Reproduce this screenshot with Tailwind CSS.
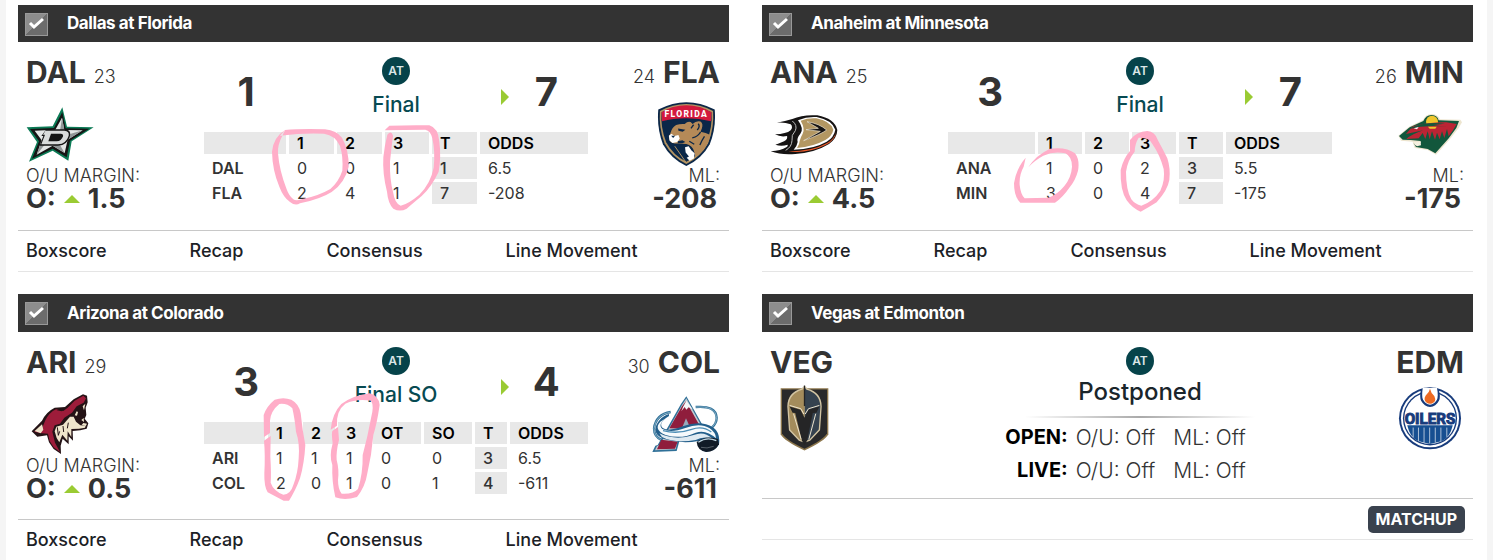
<!DOCTYPE html>
<html lang="en">
<head>
  <meta charset="utf-8" />
  <meta name="viewport" content="width=device-width, initial-scale=1" />
  <title>NHL Scoreboard</title>
  <script src="https://cdn.jsdelivr.net/npm/@tailwindcss/browser@4"></script>
</head>
<body class="bg-[#f5f5f5] font-['Inter',sans-serif] text-[#333]">
  <main class="mx-[6px] min-h-screen bg-white pt-[5px] pr-[14px] pl-3 grid grid-cols-2 gap-x-[33px] gap-y-[22px] items-start content-start overflow-hidden">

    <!-- Dallas at Florida -->
    <article>
      <header class="bg-[#333] h-[37px] pt-px pl-[7px] flex items-center">
        <label class="flex items-center gap-[19px] text-white text-[17px] font-bold tracking-tight">
          <span class="relative block size-[23px]">
            <input type="checkbox" checked class="appearance-none block size-[23px] border border-[#999] bg-linear-135 from-[#8d8d8d] from-50% to-[#6c6c6c] to-50%" />
            <svg class="absolute inset-0 pointer-events-none" viewBox="0 0 23 23" fill="none" stroke="#fff" stroke-width="3"><path d="M5 10l4 4 9-8" /></svg>
          </span>
          Dallas at Florida
        </label>
      </header>
      <div class="grid grid-cols-[183fr_390fr_138fr] h-[188px] border-b border-[#c8c8c8] box-content">
        <section class="pl-2 pt-3">
          <h2 class="flex items-baseline gap-2 text-[30px] leading-9 font-bold">DAL <small class="text-lg font-light">23</small></h2>
          <div class="mt-[11px] w-[68px] h-16 flex items-center justify-center">
            <svg class="w-[68px] h-[55px]" viewBox="78 318 204 165">
              <path d="M187 319L201 377L281 379L215 421L205 479L158 449L87 482L111 423L80 379L158 376Z" fill="#0b7a55" />
              <path d="M187 333L197 382L268 383L210 419L200 469L158 443L96 473L117 421L90 384L162 381Z" fill="#151515" />
              <path d="M186 350L193 387L248 388L203 416L194 456L158 434L110 461L125 418L104 389L166 386Z" fill="#e4e6e6" />
              <path d="M186 350L193 387L180 390ZM248 388L203 416L200 402ZM194 456L158 434L176 425ZM110 461L125 418L135 430Z" fill="#929798" />
              <path d="M139 385H194Q214 386 210 404Q203 432 174 434H119L130 405H124Z" fill="#151515" />
              <path d="M136 389H193Q209 390 206 404Q199 428 174 430H124L135 401H129Z" fill="#d9dbdb" />
              <path d="M153 398H182Q191 399 189 406Q184 421 170 421H145Z" fill="#151515" />
            </svg>
          </div>
          <p class="text-lg leading-5 font-light">O/U MARGIN:</p>
          <p class="flex items-center gap-2 text-[27px] leading-[26px] font-bold">O: <svg class="w-4 h-2" viewBox="0 0 16 8"><path d="M0 8L8 0L16 8Z" fill="#9acb33" /></svg> 1.5</p>
        </section>
        <section class="relative">
          <div class="h-[87px] px-[3px] grid grid-cols-[22fr_55fr_23fr] text-center">
            <strong class="pt-[30px] text-[40px] leading-10 font-bold">1</strong>
            <div class="pt-[15px] pl-1 flex flex-col items-center">
              <span class="size-7 rounded-full bg-[#06434a] text-[#dbe6e7] text-xs font-semibold leading-7">AT</span>
              <p class="mt-2 text-[21px] leading-6 font-medium text-[#074a52]">Final</p>
            </div>
            <div class="relative pt-[30px] pl-[5px]">
              <svg class="absolute left-px top-[47px] w-2 h-4" viewBox="0 0 8 16"><path d="M0 0L8 8L0 16Z" fill="#9acb33" /></svg>
              <strong class="block text-[40px] leading-10 font-bold">7</strong>
            </div>
          </div>
          <table class="w-full table-fixed border-separate border-spacing-[3px] text-base leading-[22px] text-left">
            <colgroup><col class="w-[82px]" /><col class="w-[45px]" /><col class="w-[45px]" /><col class="w-[44px]" /><col class="w-[45px]" /><col /></colgroup>
            <thead>
              <tr class="text-black *:bg-[#e8e8e8] *:pl-2 *:font-semibold">
                <th></th><th scope="col">1</th><th scope="col">2</th><th scope="col">3</th><th scope="col">T</th><th scope="col">ODDS</th>
              </tr>
            </thead>
            <tbody>
              <tr class="*:pl-2"><th scope="row" class="font-semibold">DAL</th><td>0</td><td>0</td><td>1</td><td class="bg-[#e8e8e8] font-medium">1</td><td>6.5</td></tr>
              <tr class="*:pl-2"><th scope="row" class="font-semibold">FLA</th><td>2</td><td>4</td><td>1</td><td class="bg-[#e8e8e8] font-medium">7</td><td>-208</td></tr>
            </tbody>
          </table>
          <!-- Marker strokes -->
          <svg class="absolute left-0 top-0 w-[390px] h-[188px] pointer-events-none" viewBox="33 6 1170 564" fill="#ffadc8">
            <path d="M285 270L270 287Q340 278 402 281Q436 286 450 318Q460 350 457 392Q446 425 421 447Q385 468 335 478Q318 484 310 478Q297 468 290 448Q268 392 264 340Q262 315 277 287L285 270Q250 292 246 335Q247 390 268 440Q280 472 300 486Q316 499 330 490Q390 478 425 456Q465 428 476 380Q477 330 456 293Q440 272 405 268Q330 266 285 270Z" fill-rule="evenodd" />
            <path d="M584 271L598 257Q660 255 718 256Q745 264 748 305Q754 350 746 395Q725 440 695 468Q665 493 650 506Q630 517 610 506Q594 490 591 455Q577 400 580 352Q584 315 592 284Q604 270 609 287Q604 325 600 365Q599 420 609 455Q614 490 632 497Q655 492 688 464Q722 430 731 383Q736 335 727 295Q722 272 706 269Q640 270 584 271Z" />
          </svg>
        </section>
        <section class="pr-[9px] pt-3 flex flex-col items-end">
          <h2 class="flex items-baseline gap-2 text-[30px] leading-9 font-bold"><small class="text-lg font-light">24</small> FLA</h2>
          <div class="mt-[11px] w-[68px] h-16 flex items-center justify-center">
            <svg class="w-[59px] h-16" viewBox="203 182 177 194">
              <path d="M206 205Q250 183 291 183Q333 183 377 205Q382 260 362 310Q338 354 291 376Q244 354 220 310Q201 260 206 205Z" fill="#0b2748" />
              <path d="M211 209Q250 188 291 188Q333 188 372 209Q376 260 357 307Q334 349 291 370Q248 349 225 307Q207 260 211 209Z" fill="#b49462" />
              <path d="M216 213Q251 194 291 194Q331 194 367 213Q371 259 352 304Q331 344 291 363Q251 344 230 304Q212 259 216 213Z" fill="#0b2748" />
              <path d="M216 213Q251 192 291 192Q331 192 367 213L366 240Q330 231 291 231Q251 231 217 240Z" fill="#d3193d" />
              <path d="M243 276Q247 260 260 252Q272 248 286 249Q296 239 304 243L310 249Q320 238 334 241Q343 247 338 262L334 272Q350 275 364 282Q358 314 335 336Q326 344 318 347L314 330Q309 314 291 309L267 308Q248 309 241 300L238 287Z" fill="#b58a58" />
              <path d="M238 284L246 278L255 285L267 282L271 293L264 303L249 306L240 299Z" fill="#fff" />
              <path d="M266 262L288 266L280 272L267 269ZM265 301L279 298L288 303L279 307L265 307ZM245 284L257 284L251 291Z" fill="#0b2748" />
              <path d="M327 248Q334 256 324 267M313 251L305 262M334 273Q328 286 309 291M346 286Q338 298 332 312M300 301L315 310" stroke="#0b2748" stroke-width="4" fill="none" />
              <path d="M287 319L298 316L306 328L316 337L314 353L301 360L292 351L299 347L289 335Z" fill="#fff" />
              <path d="M256 316L283 355L291 366" stroke="#b49462" stroke-width="3" fill="none" />
              <text x="291" y="227" font-size="26" font-weight="800" fill="#fff" text-anchor="middle" font-family="Roboto, sans-serif" letter-spacing="4">FLORIDA</text>
            </svg>
          </div>
          <p class="text-lg leading-5 font-light">ML:</p>
          <p class="pr-[3px] text-[27px] leading-[26px] font-bold">-208</p>
        </section>
      </div>
      <nav class="flex items-center gap-[83px] h-10 pl-2 border-b border-[#e5e5e5] box-content text-lg font-medium text-[#1c2126] whitespace-nowrap">
        <a href="#">Boxscore</a><a href="#">Recap</a><a href="#">Consensus</a><a href="#">Line Movement</a>
      </nav>
    </article>

    <!-- Anaheim at Minnesota -->
    <article>
      <header class="bg-[#333] h-[37px] pt-px pl-[7px] flex items-center">
        <label class="flex items-center gap-[19px] text-white text-[17px] font-bold tracking-tight">
          <span class="relative block size-[23px]">
            <input type="checkbox" checked class="appearance-none block size-[23px] border border-[#999] bg-linear-135 from-[#8d8d8d] from-50% to-[#6c6c6c] to-50%" />
            <svg class="absolute inset-0 pointer-events-none" viewBox="0 0 23 23" fill="none" stroke="#fff" stroke-width="3"><path d="M5 10l4 4 9-8" /></svg>
          </span>
          Anaheim at Minnesota
        </label>
      </header>
      <div class="grid grid-cols-[183fr_390fr_138fr] h-[188px] border-b border-[#c8c8c8] box-content">
        <section class="pl-2 pt-3">
          <h2 class="flex items-baseline gap-2 text-[30px] leading-9 font-bold">ANA <small class="text-lg font-light">25</small></h2>
          <div class="mt-[11px] w-[68px] h-16 flex items-center justify-center">
            <svg class="w-[68px] h-[41px]" viewBox="539 221 204 123">
              <path d="M559 247Q585 242 606 236Q637 222 681 225Q733 235 741 269Q740 294 716 311Q674 337 615 341Q574 345 541 333Q572 331 588 321Q593 318 592 313Q573 319 555 313Q577 306 587 299Q592 293 590 287Q571 291 554 282Q588 281 601 270Q609 260 601 252Q583 245 559 247Z" fill="#151313" />
              <path d="M623 240Q650 228 679 230Q725 239 735 268Q731 291 709 304Q671 326 610 328Q620 318 622 305Q618 294 630 280Q642 266 623 240Z" fill="#fff" />
              <path d="M631 241Q654 232 678 234Q720 242 729 268Q725 287 705 299Q669 319 620 323Q628 312 628 302Q631 290 637 280Q645 265 631 241Z" fill="#b39762" />
              <path d="M737 274Q734 294 710 308Q667 332 594 334Q654 340 704 315Q736 299 737 274Z" fill="#ee5a2a" />
              <path d="M650 244Q688 250 709 269Q692 282 640 301L690 273L647 268Q672 265 684 264Z" fill="#151313" stroke="#eee5d2" stroke-width="2" />
              <path d="M606 242Q622 255 615 271Q602 284 605 301Q604 320 586 330" stroke="#bcbcbc" stroke-width="3" fill="none" />
            </svg>
          </div>
          <p class="text-lg leading-5 font-light">O/U MARGIN:</p>
          <p class="flex items-center gap-2 text-[27px] leading-[26px] font-bold">O: <svg class="w-4 h-2" viewBox="0 0 16 8"><path d="M0 8L8 0L16 8Z" fill="#9acb33" /></svg> 4.5</p>
        </section>
        <section class="relative">
          <div class="h-[87px] px-[3px] grid grid-cols-[22fr_55fr_23fr] text-center">
            <strong class="pt-[30px] text-[40px] leading-10 font-bold">3</strong>
            <div class="pt-[15px] pl-1 flex flex-col items-center">
              <span class="size-7 rounded-full bg-[#06434a] text-[#dbe6e7] text-xs font-semibold leading-7">AT</span>
              <p class="mt-2 text-[21px] leading-6 font-medium text-[#074a52]">Final</p>
            </div>
            <div class="relative pt-[30px] pl-[5px]">
              <svg class="absolute left-px top-[47px] w-2 h-4" viewBox="0 0 8 16"><path d="M0 0L8 8L0 16Z" fill="#9acb33" /></svg>
              <strong class="block text-[40px] leading-10 font-bold">7</strong>
            </div>
          </div>
          <table class="w-full table-fixed border-separate border-spacing-[3px] text-base leading-[22px] text-left">
            <colgroup><col class="w-[87px]" /><col class="w-[44px]" /><col class="w-[44px]" /><col class="w-[44px]" /><col class="w-[44px]" /><col /></colgroup>
            <thead>
              <tr class="text-black *:bg-[#e8e8e8] *:pl-2 *:font-semibold">
                <th></th><th scope="col">1</th><th scope="col">2</th><th scope="col">3</th><th scope="col">T</th><th scope="col">ODDS</th>
              </tr>
            </thead>
            <tbody>
              <tr class="*:pl-2"><th scope="row" class="font-semibold">ANA</th><td>1</td><td>0</td><td>2</td><td class="bg-[#e8e8e8] font-medium">3</td><td>5.5</td></tr>
              <tr class="*:pl-2"><th scope="row" class="font-semibold">MIN</th><td>3</td><td>0</td><td>4</td><td class="bg-[#e8e8e8] font-medium">7</td><td>-175</td></tr>
            </tbody>
          </table>
          <!-- Marker strokes -->
          <svg class="absolute left-0 top-0 w-[390px] h-[188px] pointer-events-none" viewBox="15 6 1170 564" fill="#ffadc8">
            <path d="M265 382Q287 346 330 326Q380 320 405 340Q420 360 414 392Q407 420 388 443Q370 470 345 488H241Q222 470 222 430Q229 385 257 353L251 380Q237 405 239 435Q242 464 254 475L325 473Q352 464 373 438Q394 412 396 380Q396 350 376 340Q342 332 310 347Q282 362 265 382Z" />
            <path fill-rule="evenodd" d="M570 300Q590 274 622 273Q645 275 653 299Q670 330 682 355Q692 385 688 420Q683 450 650 487Q625 503 602 515Q578 506 560 481Q540 450 542 390Q550 355 570 333ZM596 293Q585 310 584 335Q563 360 558 395Q558 450 574 478Q585 493 604 497Q640 484 661 452Q676 420 671 387Q660 345 637 312Q628 292 596 293Z" />
          </svg>
        </section>
        <section class="pr-[9px] pt-3 flex flex-col items-end">
          <h2 class="flex items-baseline gap-2 text-[30px] leading-9 font-bold"><small class="text-lg font-light">26</small> MIN</h2>
          <div class="mt-[11px] w-[68px] h-16 flex items-center justify-center">
            <svg class="w-16 h-[42px]" viewBox="175 337 192 126">
              <path d="M176 405L208 378L250 358Q258 339 278 340Q296 342 301 356L362 357L367 365L357 382L331 415L289 462L264 448L225 442L219 423L184 420Z" fill="#ede5cf" />
              <path d="M178 406L210 380L251 361Q259 342 277 343Q293 344 297 359L358 361L350 382L326 414L287 458L264 445L229 439L222 428L243 427L243 421L213 418L189 417Z" fill="#12573c" />
              <circle cx="277" cy="363" r="18" fill="#efc62c" />
              <path d="M219 377Q269 364 320 365L351 370L340 389L327 407L322 385L314 412L307 392L300 416L292 396L286 417L277 392L270 416L264 392L257 415L249 397L237 413L200 415Q215 401 251 389L199 400Z" fill="#bb2434" />
              <path d="M205 386Q250 360 316 369L280 373L326 380Q265 370 205 386Z" fill="#12573c" />
              <path d="M265 378L291 378L287 384L270 384Z" fill="#efc62c" />
              <path d="M222 383L237 379L232 386Z" fill="#fff" />
              <path d="M221 424L243 423L244 434L232 437L225 432Z" fill="#f5efdf" />
            </svg>
          </div>
          <p class="text-lg leading-5 font-light">ML:</p>
          <p class="pr-[3px] text-[27px] leading-[26px] font-bold">-175</p>
        </section>
      </div>
      <nav class="flex items-center gap-[83px] h-10 pl-2 border-b border-[#e5e5e5] box-content text-lg font-medium text-[#1c2126] whitespace-nowrap">
        <a href="#">Boxscore</a><a href="#">Recap</a><a href="#">Consensus</a><a href="#">Line Movement</a>
      </nav>
    </article>

    <!-- Arizona at Colorado -->
    <article>
      <header class="bg-[#333] h-[38px] pt-px pl-[7px] flex items-center">
        <label class="flex items-center gap-[19px] text-white text-[17px] font-bold tracking-tight">
          <span class="relative block size-[23px]">
            <input type="checkbox" checked class="appearance-none block size-[23px] border border-[#999] bg-linear-135 from-[#8d8d8d] from-50% to-[#6c6c6c] to-50%" />
            <svg class="absolute inset-0 pointer-events-none" viewBox="0 0 23 23" fill="none" stroke="#fff" stroke-width="3"><path d="M5 10l4 4 9-8" /></svg>
          </span>
          Arizona at Colorado
        </label>
      </header>
      <div class="grid grid-cols-[183fr_390fr_138fr] h-[187px] border-b border-[#c8c8c8] box-content">
        <section class="pl-2 pt-3">
          <h2 class="flex items-baseline gap-2 text-[30px] leading-9 font-bold">ARI <small class="text-lg font-light">29</small></h2>
          <div class="mt-[11px] w-[68px] h-16 flex items-center justify-center">
            <svg class="w-[58px] h-[60px]" viewBox="94 337 174 180">
              <path d="M96 449L127 417Q139 391 165 378L196 376L222 353L250 338L262 342L264 362L258 378L260 400L255 411L266 425L261 441L242 446L219 448L220 477L207 464L207 488L189 471L183 492L184 517L162 502L148 482L142 461L113 465Z" fill="#241316" />
              <path d="M137 416Q149 392 169 383L191 388L204 378L225 357L251 342L259 350L252 363L231 374L217 393L194 408L181 426L165 431L158 450L166 483L181 511L162 497L150 478L145 456L127 455L103 450L129 435Z" fill="#9d1c3a" />
              <path d="M211 405L222 405L229 420L242 431L258 432L256 438L238 441L215 442L215 466L204 449L203 477L188 459L179 482L171 469L165 449L170 435L190 429Z" fill="#efe4cb" />
              <path d="M105 448L127 428L131 444L123 455Z" fill="#efe4cb" />
              <path d="M223 403L236 377L254 367L248 380L257 402L246 421L233 417Z" fill="#241316" />
              <path d="M225 401L231 389L235 391L232 402ZM249 374L257 366L253 386ZM245 415L252 409L253 421ZM251 424L262 426L258 433L246 430Z" fill="#efe4cb" />
              <path d="M171 386L193 379L187 389Z" fill="#241316" />
              <path d="M173 437L176 461L180 449M190 433L192 451M206 423L203 440" stroke="#241316" stroke-width="3" fill="none" />
            </svg>
          </div>
          <p class="text-lg leading-5 font-light">O/U MARGIN:</p>
          <p class="flex items-center gap-2 text-[27px] leading-[26px] font-bold">O: <svg class="w-4 h-2" viewBox="0 0 16 8"><path d="M0 8L8 0L16 8Z" fill="#9acb33" /></svg> 0.5</p>
        </section>
        <section class="relative">
          <div class="h-[87px] px-[3px] grid grid-cols-[22fr_55fr_23fr] text-center">
            <strong class="pt-[30px] text-[40px] leading-10 font-bold">3</strong>
            <div class="pt-[15px] pl-1 flex flex-col items-center">
              <span class="size-7 rounded-full bg-[#06434a] text-[#dbe6e7] text-xs font-semibold leading-7">AT</span>
              <p class="mt-2 text-[21px] leading-6 font-medium text-[#074a52]">Final SO</p>
            </div>
            <div class="relative pt-[30px] pl-[5px]">
              <svg class="absolute left-px top-[47px] w-2 h-4" viewBox="0 0 8 16"><path d="M0 0L8 8L0 16Z" fill="#9acb33" /></svg>
              <strong class="block text-[40px] leading-10 font-bold">4</strong>
            </div>
          </div>
          <table class="w-full table-fixed border-separate border-spacing-[3px] text-base leading-[22px] text-left">
            <colgroup><col class="w-[61px]" /><col class="w-8" /><col class="w-8" /><col class="w-8" /><col class="w-12" /><col class="w-12" /><col class="w-8" /><col /></colgroup>
            <thead>
              <tr class="text-black *:bg-[#e8e8e8] *:pl-2 *:font-semibold">
                <th></th><th scope="col">1</th><th scope="col">2</th><th scope="col">3</th><th scope="col">OT</th><th scope="col">SO</th><th scope="col">T</th><th scope="col">ODDS</th>
              </tr>
            </thead>
            <tbody>
              <tr class="*:pl-2"><th scope="row" class="font-semibold">ARI</th><td>1</td><td>1</td><td>1</td><td>0</td><td>0</td><td class="bg-[#e8e8e8] font-medium">3</td><td>6.5</td></tr>
              <tr class="*:pl-2"><th scope="row" class="font-semibold">COL</th><td>2</td><td>0</td><td>1</td><td>0</td><td>1</td><td class="bg-[#e8e8e8] font-medium">4</td><td>-611</td></tr>
            </tbody>
          </table>
          <!-- Marker strokes -->
          <svg class="absolute left-0 top-0 w-[390px] h-[188px] pointer-events-none" viewBox="33 6 1170 564" fill="#ffadc8">
            <path d="M222 321L221 255Q230 228 254 209Q280 200 304 209Q328 222 332 250Q337 300 346 345Q343 400 330 445Q315 485 297 512H281L233 487Q222 470 223 430Q226 375 222 332L242 318L241 380Q244 430 242 458Q250 482 280 494Q302 493 310 465Q324 430 326 385Q330 340 318 305Q314 265 307 235Q291 219 268 222Q242 243 240 272V309Z" />
            <path d="M422 299Q427 250 454 222Q490 196 539 190Q566 197 569 225Q561 280 550 315Q545 375 532 430Q526 470 501 501Q465 512 436 502Q425 455 427 405Q417 380 428 340Q424 310 427 303L444 291L447 330Q438 365 440 390Q448 420 444 450Q444 478 455 491Q490 493 504 477Q519 430 518 375Q533 320 543 265Q553 226 543 212Q500 205 466 221Q438 242 441 287Z" />
          </svg>
        </section>
        <section class="pr-[9px] pt-3 flex flex-col items-end">
          <h2 class="flex items-baseline gap-2 text-[30px] leading-9 font-bold"><small class="text-lg font-light">30</small> COL</h2>
          <div class="mt-[11px] w-[68px] h-16 flex items-center justify-center">
            <svg class="w-[68px] h-[57px]" viewBox="188 343 204 171">
              <path d="M244 391Q200 398 194 440Q194 466 218 476M319 376Q380 371 382 408Q382 425 368 437" fill="none" stroke="#2f7098" stroke-width="7" />
              <path d="M244 391Q200 398 194 440Q194 466 218 476M319 376Q380 371 382 408Q382 425 368 437" fill="none" stroke="#a9c8d8" stroke-width="2" />
              <path d="M291 344L350 449L305 465L272 471L262 508L189 511L198 492L205 490L275 367Z" fill="#2f7098" />
              <path d="M291 350L343 445L304 458L266 472L259 503L197 506L203 493L211 490L278 370Z" fill="#c2c9d0" />
              <path d="M290 359L337 443L240 440L278 374ZM216 474L265 480L257 501L203 503Z" fill="#8f1d3c" />
              <path d="M281 376L291 357L310 383L298 377L291 384L286 376L276 389Z" fill="#f5f7f9" />
              <path d="M290 410L302 437H279Z" fill="#98a9bb" />
              <path d="M239 403Q205 424 220 439Q238 451 280 434Q334 414 371 437Q394 454 389 488Q378 510 349 510Q320 501 327 478Q277 488 224 472Q181 454 209 417Q222 402 239 397Z" fill="#235f8b" />
              <path d="M234 407Q203 428 219 442Q244 455 288 439Q332 422 361 440Q380 453 380 470Q350 442 319 453Q275 474 229 460Q191 443 213 420Z" fill="#f6fafc" />
              <path d="M210 455Q259 478 313 460Q344 447 368 470Q339 463 319 475Q257 486 218 466Z" fill="#dfeaf1" />
              <path d="M221 447Q265 458 307 443Q340 431 366 451" fill="none" stroke="#4b8db5" stroke-width="4" />
              <path d="M322 481Q350 459 386 472L389 488Q376 511 351 511Q324 507 322 481Z" fill="#111b27" />
              <path d="M327 482Q352 464 381 477" fill="none" stroke="#bfd7e4" stroke-width="4" />
              <path d="M335 497Q352 502 373 494" fill="none" stroke="#777f87" stroke-width="2" />
            </svg>
          </div>
          <p class="text-lg leading-5 font-light">ML:</p>
          <p class="pr-[3px] text-[27px] leading-[26px] font-bold">-611</p>
        </section>
      </div>
      <nav class="flex items-center gap-[83px] h-10 pl-2 border-b border-[#e5e5e5] box-content text-lg font-medium text-[#1c2126] whitespace-nowrap">
        <a href="#">Boxscore</a><a href="#">Recap</a><a href="#">Consensus</a><a href="#">Line Movement</a>
      </nav>
    </article>

    <!-- Vegas at Edmonton -->
    <article>
      <header class="bg-[#333] h-[38px] pt-px pl-[7px] flex items-center">
        <label class="flex items-center gap-[19px] text-white text-[17px] font-bold tracking-tight">
          <span class="relative block size-[23px]">
            <input type="checkbox" checked class="appearance-none block size-[23px] border border-[#999] bg-linear-135 from-[#8d8d8d] from-50% to-[#6c6c6c] to-50%" />
            <svg class="absolute inset-0 pointer-events-none" viewBox="0 0 23 23" fill="none" stroke="#fff" stroke-width="3"><path d="M5 10l4 4 9-8" /></svg>
          </span>
          Vegas at Edmonton
        </label>
      </header>
      <div class="grid grid-cols-[183fr_390fr_138fr] h-[166px] border-b border-[#c8c8c8] box-content">
        <section class="pl-2 pt-3">
          <h2 class="text-[30px] leading-9 font-bold">VEG</h2>
          <div class="mt-[6px] w-[68px] h-16 flex items-center justify-center">
            <svg class="w-[49px] h-[66px]" viewBox="565 315 148 198">
              <path d="M567 324H711V463Q701 483 639 512Q577 483 567 463Z" fill="#8c764c" />
              <path d="M571 328H707V461Q696 480 639 507Q582 480 571 461Z" fill="#29292a" />
              <path d="M639 316L649 326Q690 337 691 379L686 451L656 483L639 489L622 483L592 451L587 379Q588 337 629 326Z" fill="#d3c5a3" />
              <path d="M639 321L645 329Q685 340 687 379L682 449L654 479L639 484Z" fill="#35424f" />
              <path d="M639 321L633 329Q593 340 591 379L596 449L624 479L639 484Z" fill="#a48c5c" />
              <path d="M594 379L627 389L639 413L651 389L684 379L675 398L664 399L647 482L639 496L631 482L611 399L603 398Z" fill="#252526" />
              <path d="M594 376L628 386L637 402M684 376L651 386L641 402M606 401L629 479M673 401L652 479" stroke="#eee5cf" stroke-width="3" fill="none" />
              <path d="M639 316V378" stroke="#252526" stroke-width="4" />
            </svg>
          </div>
        </section>
        <section class="pt-[15px] flex flex-col items-center">
          <span class="size-7 rounded-full bg-[#06434a] text-[#dbe6e7] text-xs font-semibold leading-7 text-center">AT</span>
          <p class="mt-px text-2xl leading-8 font-medium text-[#1a252b]">Postponed</p>
          <div class="mt-2 w-[230px] h-[2px] bg-linear-to-r from-transparent via-[#aaa] to-transparent"></div>
          <dl class="mt-[3px] mr-[29px] grid grid-cols-[auto_auto] gap-x-2">
            <dt class="text-right text-xl leading-[33px] font-bold text-black">OPEN:</dt>
            <dd class="flex gap-[18px] text-[21px] leading-[33px] font-light"><span>O/U: Off</span><span>ML: Off</span></dd>
            <dt class="text-right text-xl leading-[33px] font-bold text-black">LIVE:</dt>
            <dd class="flex gap-[18px] text-[21px] leading-[33px] font-light"><span>O/U: Off</span><span>ML: Off</span></dd>
          </dl>
        </section>
        <section class="pr-[9px] pt-3 flex flex-col items-end">
          <h2 class="text-[30px] leading-9 font-bold">EDM</h2>
          <div class="mt-[6px] w-[68px] h-16 flex items-center justify-center">
            <svg class="w-16 h-16" viewBox="176 166 192 194">
              <circle cx="272" cy="264" r="94" fill="#173b7c" />
              <circle cx="272" cy="264" r="88" fill="#fff" />
              <circle cx="272" cy="264" r="82" fill="#173b7c" />
              <circle cx="272" cy="264" r="78" fill="#fff" />
              <path d="M244 178Q240 200 245 211Q255 229 272 230Q290 229 299 211Q305 200 299 178L272 169Z" fill="#173b7c" />
              <path d="M250 171Q246 198 251 208Q259 222 272 223Q285 222 293 208Q298 196 293 171Z" fill="#fff" />
              <path d="M272 174Q275 188 285 196Q293 213 278 219Q269 222 261 216Q251 207 259 195Q270 185 272 174Z" fill="#ed6a22" />
              <path d="M203 285H341Q333 321 309 333L272 342L235 333Q211 321 203 285Z" fill="#174f91" />
              <path d="M221 292V322M237 292V333M254 292V337M271 292V340M288 292V337M305 292V334M323 292V320" stroke="#fff" stroke-width="2" />
              <text x="272" y="281" font-size="46" font-weight="700" fill="#173b7c" stroke="#173b7c" stroke-width="3" text-anchor="middle" font-family="Liberation Sans Narrow, Roboto, sans-serif">OILERS</text>
            </svg>
          </div>
        </section>
      </div>
      <div class="flex items-center justify-end h-10 pr-2 border-b border-[#e5e5e5] box-content">
        <button type="button" class="h-[27px] px-2 rounded-[5px] bg-[#3a424e] text-white text-base leading-[27px] font-bold">MATCHUP</button>
      </div>
    </article>

  </main>
</body>
</html>
